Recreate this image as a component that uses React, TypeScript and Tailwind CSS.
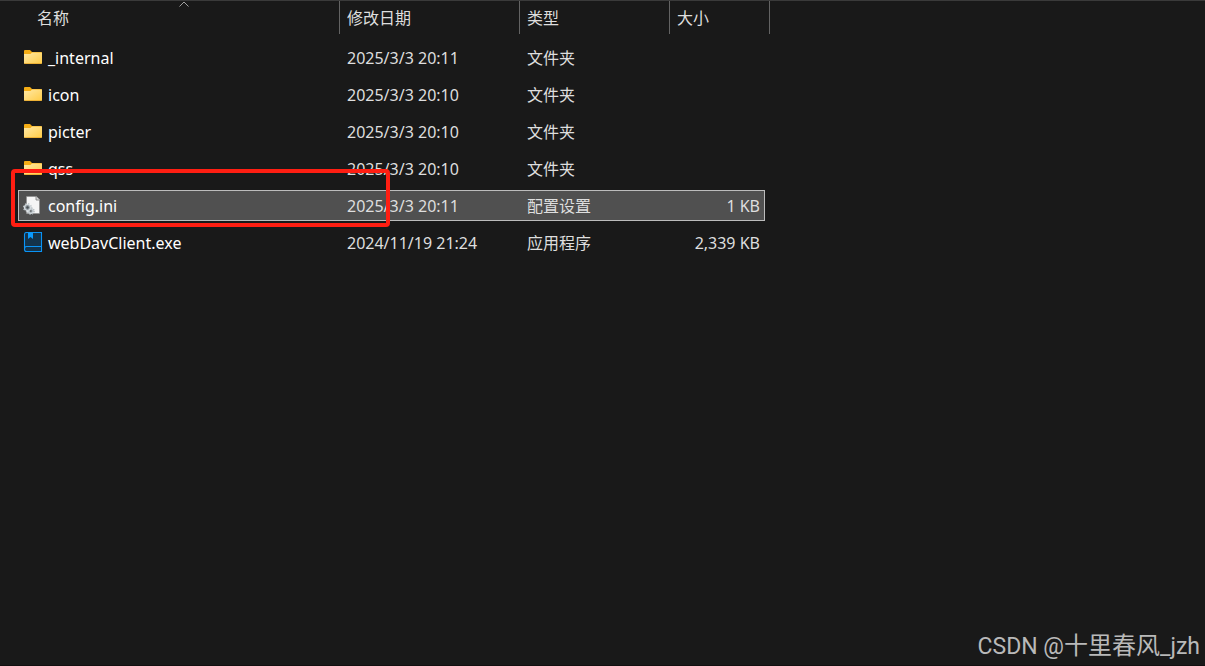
type FileKind = "folder" | "ini" | "exe";

type FileItem = {
  name: string;
  kind: FileKind;
  date: string;
  type: string;
  size?: string;
  selected?: boolean;
};

const files: FileItem[] = [
  { name: "_internal", kind: "folder", date: "2025/3/3 20:11", type: "文件夹" },
  { name: "icon", kind: "folder", date: "2025/3/3 20:10", type: "文件夹" },
  { name: "picter", kind: "folder", date: "2025/3/3 20:10", type: "文件夹" },
  { name: "qss", kind: "folder", date: "2025/3/3 20:10", type: "文件夹" },
  { name: "config.ini", kind: "ini", date: "2025/3/3 20:11", type: "配置设置", size: "1 KB", selected: true },
  { name: "webDavClient.exe", kind: "exe", date: "2024/11/19 21:24", type: "应用程序", size: "2,339 KB" },
];

const columns = ["名称", "修改日期", "类型", "大小"];

function FolderIcon() {
  return (
    <svg viewBox="0 0 20 21" className="h-[21px] w-5 shrink-0" aria-hidden="true">
      <defs>
        <linearGradient id="folder" x1="0" y1="0" x2="1" y2="1">
          <stop offset="0" stopColor="#ffe9a6" />
          <stop offset="1" stopColor="#ffcb45" />
        </linearGradient>
      </defs>
      <path d="M1 4Q1 3 2 3H7L9 5H18Q19 5 19 6V9H1Z" fill="#f5ad15" />
      <path d="M1 7H7.5L9 5.5H19V16Q19 17 18 17H2Q1 17 1 16Z" fill="url(#folder)" />
      <path d="M1.5 16.5H18.5" stroke="#e8a82c" strokeWidth="0.8" />
    </svg>
  );
}

function ConfigIcon() {
  return (
    <svg viewBox="0 0 20 21" className="h-[21px] w-5 shrink-0" aria-hidden="true">
      <path d="M3.5 1.5H13.5L16.5 4.5V18.5H3.5Z" fill="#f5f5f5" stroke="#8b8b8b" strokeWidth="0.6" />
      <path d="M13 1.5V5H16.5" fill="#d8d8d8" stroke="#777" strokeWidth="0.8" />
      <circle cx="7.8" cy="16" r="2.4" fill="#9aa4aa" stroke="#d3d9dc" strokeWidth="1.2" />
      <circle cx="7.8" cy="16" r="3.3" fill="none" stroke="#aeb6ba" strokeWidth="1.2" strokeDasharray="1.3 1.3" />
      <circle cx="4.5" cy="12.5" r="3" fill="#8f999f" stroke="#d9dfe2" strokeWidth="1.2" />
      <circle cx="4.5" cy="12.5" r="3.9" fill="none" stroke="#c3cace" strokeWidth="1.2" strokeDasharray="1.5 1.56" />
      <circle cx="4.5" cy="12.5" r="1.2" fill="#4a5054" />
      <circle cx="7.8" cy="16" r="0.8" fill="#555" />
    </svg>
  );
}

function AppIcon() {
  return (
    <svg viewBox="0 0 20 21" className="h-[21px] w-5 shrink-0" aria-hidden="true">
      <path d="M3.5 0.5H18.5V19.5H3.5Q1.5 19.5 1.5 17.5V2.5Q1.5 0.5 3.5 0.5Z" fill="#14334a" />
      <path
        d="M18.5 14.5V0.5H3.5Q1.5 0.5 1.5 2.5V17.5Q1.5 19.5 3.5 19.5H18.5V14.5H3.5Q1.5 14.5 1.5 17"
        fill="none"
        stroke="#0a93f5"
        strokeWidth="1.1"
      />
      <path d="M5 0.5H10V7L7.5 5L5 7Z" fill="#0a9bff" />
    </svg>
  );
}

function FileIcon({ kind }: { kind: FileKind }) {
  if (kind === "folder") return <FolderIcon />;
  if (kind === "ini") return <ConfigIcon />;
  return <AppIcon />;
}

function Header() {
  return (
    <thead className="block pl-[30px]">
      <tr className="grid h-[33px] grid-cols-[310px_180px_150px_100px]">
        {columns.map((label, index) => (
          <th key={label} className="relative border-r border-[#636363] font-normal">
            <button type="button" className="flex size-full items-center pl-[7px]">
              {label}
            </button>
            {index === 0 && (
              <svg viewBox="0 0 10 6" className="absolute top-0 left-[149px] h-[6px] w-[10px]" aria-hidden="true">
                <path d="M0.5 5.5L5 1L9.5 5.5" fill="none" stroke="#a0a0a0" strokeWidth="1" />
              </svg>
            )}
          </th>
        ))}
      </tr>
    </thead>
  );
}

function FileRow({ file }: { file: FileItem }) {
  return (
    <tr
      aria-selected={file.selected}
      className={`relative grid h-[31px] grid-cols-[322px_180px_150px_95px] pt-[5px] leading-[23px] ${
        file.selected ? "bg-[#505050] outline -outline-offset-1 outline-[#bcbcbc]" : ""
      }`}
    >
      <td className="flex items-start gap-[5px] pl-[5px] text-white">
        <FileIcon kind={file.kind} />
        {file.name}
        {file.selected && (
          <span className="pointer-events-none absolute -top-[21px] -left-[7px] z-10 h-[58px] w-[379px] rounded-[4px] border-4 border-[#ff1e12]" />
        )}
      </td>
      <td className="pl-[7px]">{file.date}</td>
      <td className="pl-[7px]">{file.type}</td>
      <td className="pr-[5px] text-right">{file.size}</td>
    </tr>
  );
}

export default function App() {
  return (
    <main className="flex min-h-screen flex-col justify-between overflow-hidden border-t border-b border-t-[#3a3a3a] border-b-[#120f10] bg-[#191919] font-['Noto_Sans','Noto_Sans_CJK_SC',sans-serif] text-base text-[#dedede]">
      <table className="block">
        <Header />
        <tbody className="flex w-fit flex-col gap-[6px] pt-[8px] pl-[18px]">
          {files.map((file) => (
            <FileRow key={file.name} file={file} />
          ))}
        </tbody>
      </table>
      <p className="self-end pr-[5px] pb-[2px] font-['Roboto','Noto_Sans_CJK_SC',sans-serif] text-[23px] leading-8 text-[#b9b9b9]">
        CSDN @<span className="text-2xl leading-8">十里春风</span>_jzh
      </p>
    </main>
  );
}
